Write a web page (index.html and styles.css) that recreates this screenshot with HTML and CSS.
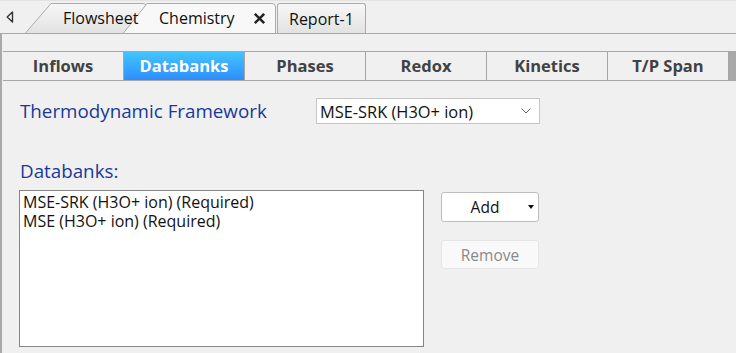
FILE: index.html
```html
<!DOCTYPE html>
<html lang="en">
<head>
    <meta charset="UTF-8">
    <meta name="viewport" content="width=device-width, initial-scale=1.0">
    <title>Chemistry</title>
    <link rel="stylesheet" href="styles.css">
</head>
<body>
    <!-- Document tabs -->
    <div class="doc-tabs">
        <div class="scroll-left">
            <svg width="8" height="12" viewBox="0 0 8 12"><path d="M6.5 1 L1.2 6 L6.5 11 Z" fill="none" stroke="#333" stroke-width="1.4" stroke-linejoin="round"/></svg>
        </div>
        <div class="doc-tab flowsheet">
            <svg class="tab-shape" width="122" height="30" viewBox="0 0 122 30">
                <defs>
                    <linearGradient id="tabFill" x1="0" y1="0" x2="0" y2="1">
                        <stop offset="0" stop-color="#f7f7f7"/>
                        <stop offset="1" stop-color="#e2e2e2"/>
                    </linearGradient>
                </defs>
                <path d="M0.5 30 L26 0.5 H118 Q121.5 0.5 121.5 4 V30" fill="url(#tabFill)" stroke="#ababab"/>
            </svg>
            <span class="tab-label">Flowsheet</span>
        </div>
        <div class="doc-tab chemistry">
            <svg class="tab-shape" width="153" height="30" viewBox="0 0 153 30">
                <path d="M0.5 30 L24 0.5 H149 Q152.5 0.5 152.5 4 V30" fill="#f8f8f8" stroke="#ababab"/>
            </svg>
            <span class="tab-label">Chemistry</span>
            <svg class="close" width="13" height="13" viewBox="0 0 13 13"><path d="M1.8 1.8 L11.2 11.2 M11.2 1.8 L1.8 11.2" stroke="#222" stroke-width="2.5"/></svg>
        </div>
        <div class="doc-tab report">
            <span class="tab-label">Report-1</span>
        </div>
    </div>

    <div class="page">
        <!-- Section tabs -->
        <div class="section-tabs">
            <div class="section-tab">Inflows</div>
            <div class="section-tab active">Databanks</div>
            <div class="section-tab">Phases</div>
            <div class="section-tab">Redox</div>
            <div class="section-tab">Kinetics</div>
            <div class="section-tab">T/P Span</div>
            <div class="tab-scroll"></div>
        </div>

        <div class="form">
            <div class="framework-row">
                <label class="field-label framework-label">Thermodynamic Framework</label>
                <div class="select">
                    <span>MSE-SRK (H3O+ ion)</span>
                    <svg width="10" height="6" viewBox="0 0 10 6"><path d="M0.5 0.5 L5 5 L9.5 0.5" fill="none" stroke="#606060" stroke-width="1"/></svg>
                </div>
            </div>

            <div class="field-label databanks-label">Databanks:</div>

            <div class="databanks-row">
                <ul class="listbox">
                    <li>MSE-SRK (H3O+ ion) (Required)</li>
                    <li>MSE (H3O+ ion) (Required)</li>
                </ul>
                <div class="list-actions">
                    <button class="btn add">
                        <span>Add</span>
                        <svg width="6" height="4" viewBox="0 0 6 4"><path d="M0 0 H6 L3 4 Z" fill="#111"/></svg>
                    </button>
                    <button class="btn remove" disabled>Remove</button>
                </div>
            </div>
        </div>
    </div>
</body>
</html>
```

FILE: styles.css
```css
* {
    box-sizing: border-box;
    margin: 0;
    padding: 0;
}

body {
    width: 736px;
    height: 353px;
    overflow: hidden;
    background-color: #f0f0f0;
    font-family: "Open Sans", "Noto Sans", sans-serif;
    color: #111;
}

/* Document tabs */
.doc-tabs {
    display: flex;
    align-items: flex-end;
    height: 34px;
    border-top: 1px solid #e2e2e2;
    border-bottom: 1px solid #a8a8a8;
}

.scroll-left {
    width: 25px;
    align-self: stretch;
    display: flex;
    align-items: center;
    padding-left: 6px;
}

.doc-tab {
    position: relative;
    height: 30px;
    display: flex;
    align-items: center;
    font-size: 16px;
    color: #111;
}

.tab-shape {
    position: absolute;
    left: 0;
    top: 0;
}

/* labels paint above every tab shape, as in the original strip */
.tab-label,
.close {
    position: relative;
    z-index: 1;
}

.flowsheet {
    width: 122px;
    padding-left: 38px;
}

.chemistry {
    width: 153px;
    margin-left: -24px;
    padding-left: 36px;
}

.chemistry .close {
    margin-left: 18px;
}

.report {
    width: 89px;
    margin-left: 1px;
    padding-left: 11px;
    border: 1px solid #ababab;
    border-bottom: none;
    border-radius: 3px 3px 0 0;
    background: linear-gradient(#f7f7f7, #e2e2e2);
}

/* Page */
.page {
    height: 319px;
    border-left: 2px solid #a9a9a9;
    padding-top: 17px;
}

.section-tabs {
    display: flex;
    height: 30px;
    margin-left: 1px;
    border-top: 1px solid #a6a6a6;
    border-bottom: 1px solid #a6a6a6;
}

.section-tab {
    width: 121px;
    border-right: 1px solid #a6a6a6;
    text-align: center;
    font-size: 16.5px;
    font-weight: bold;
    line-height: 28px;
    color: #424242;
}

.section-tab.active {
    background: linear-gradient(#42c6ff, #2e8dff);
    color: #fff;
}

.tab-scroll {
    flex: 1;
    background-color: #a9a9a9;
}

.form {
    padding: 17px 0 0 17px;
}

.field-label {
    font-size: 18.8px;
    color: #18389a;
}

.framework-row {
    display: flex;
    align-items: center;
    height: 26px;
}

.framework-label {
    width: 297px;
    padding-left: 1px;
}

.select {
    width: 224px;
    height: 26px;
    display: flex;
    align-items: center;
    justify-content: space-between;
    padding: 0 8px 0 3px;
    background-color: #fff;
    border: 1px solid #c6c6c6;
    font-size: 16.4px;
}

.databanks-label {
    margin-top: 33px;
    padding-left: 1px;
    line-height: 28px;
}

.databanks-row {
    display: flex;
    gap: 17px;
    margin-top: 5px;
}

.listbox {
    list-style: none;
    width: 405px;
    height: 157px;
    padding: 2px 3px;
    background-color: #fff;
    border: 1px solid #858585;
    font-size: 16px;
    line-height: 18.5px;
}

.list-actions {
    display: flex;
    flex-direction: column;
    gap: 18px;
    margin-top: 2px;
}

.btn {
    width: 98px;
    height: 30px;
    border-radius: 3px;
    font-family: inherit;
    font-size: 15.5px;
}

.add {
    display: flex;
    align-items: center;
    padding-right: 4px;
    background-color: #fff;
    border: 1px solid #bdbdbd;
    color: #111;
}

.add span {
    flex: 1;
    text-align: center;
}

.remove {
    height: 29px;
    background-color: #f9f9f9;
    border: 1px solid #e6e6e6;
    color: #8a8a8a;
}
```
